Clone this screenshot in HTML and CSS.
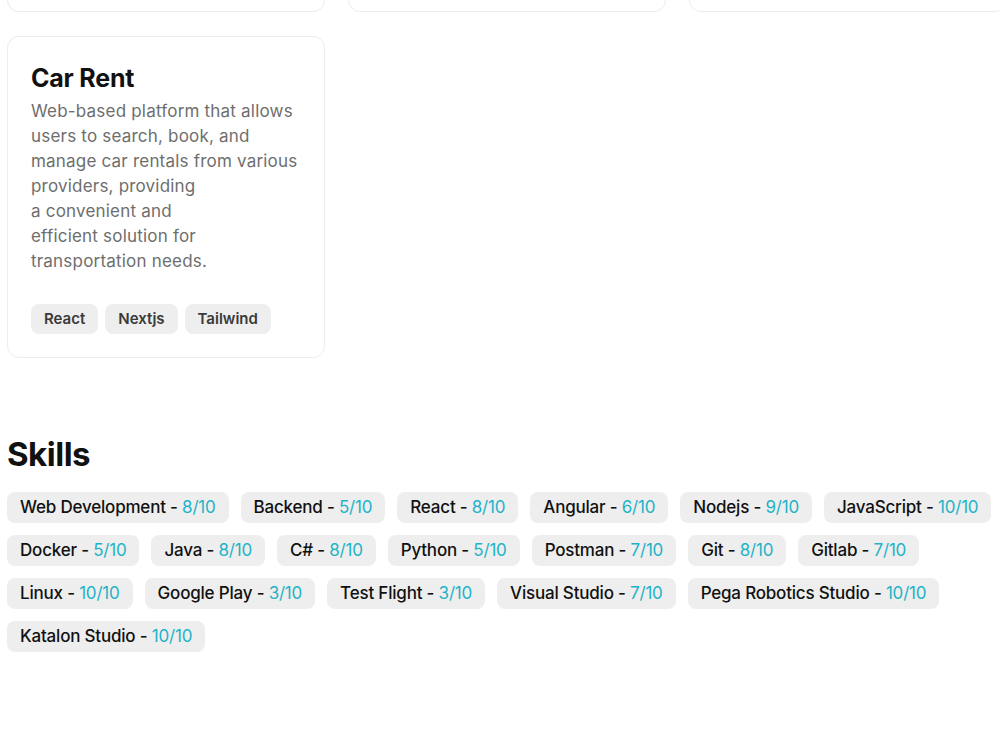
FILE: index.html
```html
<!DOCTYPE html>
<html lang="en">
<head>
  <meta charset="UTF-8" />
  <meta name="viewport" content="width=device-width, initial-scale=1.0"/>
  <title>Portfolio</title>
  <link rel="stylesheet" href="styles.css">
</head>
<body>
  <div class="page">
    <!-- Projetos -->
    <div class="projects">
      <div class="card card-cut"></div>
      <div class="card card-cut"></div>
      <div class="card card-cut"></div>

      <div class="card">
        <h3 class="card-title">Car Rent</h3>
        <p class="card-text">Web-based platform that allows users to search, book, and manage car rentals from various providers, providing<br>a convenient and<br>efficient solution for transportation needs.</p>
        <div class="tags">
          <span class="tag">React</span>
          <span class="tag">Nextjs</span>
          <span class="tag">Tailwind</span>
        </div>
      </div>
    </div>

    <!-- Skills -->
    <section class="skills">
      <h2 class="skills-title">Skills</h2>
      <div class="skill-list">
        <span class="skill">Web Development - <em>8/10</em></span>
        <span class="skill">Backend - <em>5/10</em></span>
        <span class="skill">React - <em>8/10</em></span>
        <span class="skill">Angular - <em>6/10</em></span>
        <span class="skill">Nodejs - <em>9/10</em></span>
        <span class="skill">JavaScript - <em>10/10</em></span>
        <span class="skill">Docker - <em>5/10</em></span>
        <span class="skill">Java - <em>8/10</em></span>
        <span class="skill">C# - <em>8/10</em></span>
        <span class="skill">Python - <em>5/10</em></span>
        <span class="skill">Postman - <em>7/10</em></span>
        <span class="skill">Git - <em>8/10</em></span>
        <span class="skill">Gitlab - <em>7/10</em></span>
        <span class="skill">Linux - <em>10/10</em></span>
        <span class="skill">Google Play - <em>3/10</em></span>
        <span class="skill">Test Flight - <em>3/10</em></span>
        <span class="skill">Visual Studio - <em>7/10</em></span>
        <span class="skill">Pega Robotics Studio - <em>10/10</em></span>
        <span class="skill">Katalon Studio - <em>10/10</em></span>
      </div>
    </section>
  </div>
</body>
</html>
```

FILE: styles.css
```css
* {
  box-sizing: border-box;
  margin: 0;
  padding: 0;
}

body {
  background: #fff;
  font-family: 'Inter', sans-serif;
  color: #111;
  overflow: hidden;
  width: 1000px;
  height: 750px;
}

.page {
  padding: 0 0 0 7px;
  width: 1040px;
}

.projects {
  display: grid;
  grid-template-columns: repeat(3, 318px);
  column-gap: 23px;
  row-gap: 24px;
  margin-top: -60px;
}

.card {
  border: 1px solid #ececec;
  border-radius: 12px;
  padding: 25px 23px 23px;
}

.card-cut {
  height: 72px;
}

.card-title {
  font-size: 25px;
  font-weight: 700;
  letter-spacing: -0.2px;
  color: #111;
  line-height: 32px;
  margin-bottom: 5px;
}

.card-text {
  font-size: 17px;
  line-height: 25px;
  color: #6e6e6e;
  letter-spacing: 0.2px;
}

.tags {
  display: flex;
  gap: 7px;
  margin-top: 30px;
}

.tag {
  background: #eeeeee;
  border-radius: 8px;
  padding: 0 13px;
  height: 30px;
  line-height: 30px;
  font-size: 15px;
  font-weight: 600;
  color: #3a3a3a;
}

.skills {
  margin-top: 76px;
}

.skills-title {
  font-size: 33px;
  font-weight: 700;
  letter-spacing: -0.5px;
  line-height: 40px;
  margin-bottom: 18px;
}

.skill-list {
  display: flex;
  flex-wrap: wrap;
  gap: 12px;
  width: 990px;
}

.skill {
  background: #eeeeee;
  border-radius: 8px;
  padding: 0 13px;
  height: 31px;
  line-height: 31px;
  font-size: 17px;
  font-weight: 500;
  color: #111;
  letter-spacing: -0.2px;
}

.skill em {
  font-style: normal;
  font-weight: 400;
  color: #1fb3c8;
}
```
